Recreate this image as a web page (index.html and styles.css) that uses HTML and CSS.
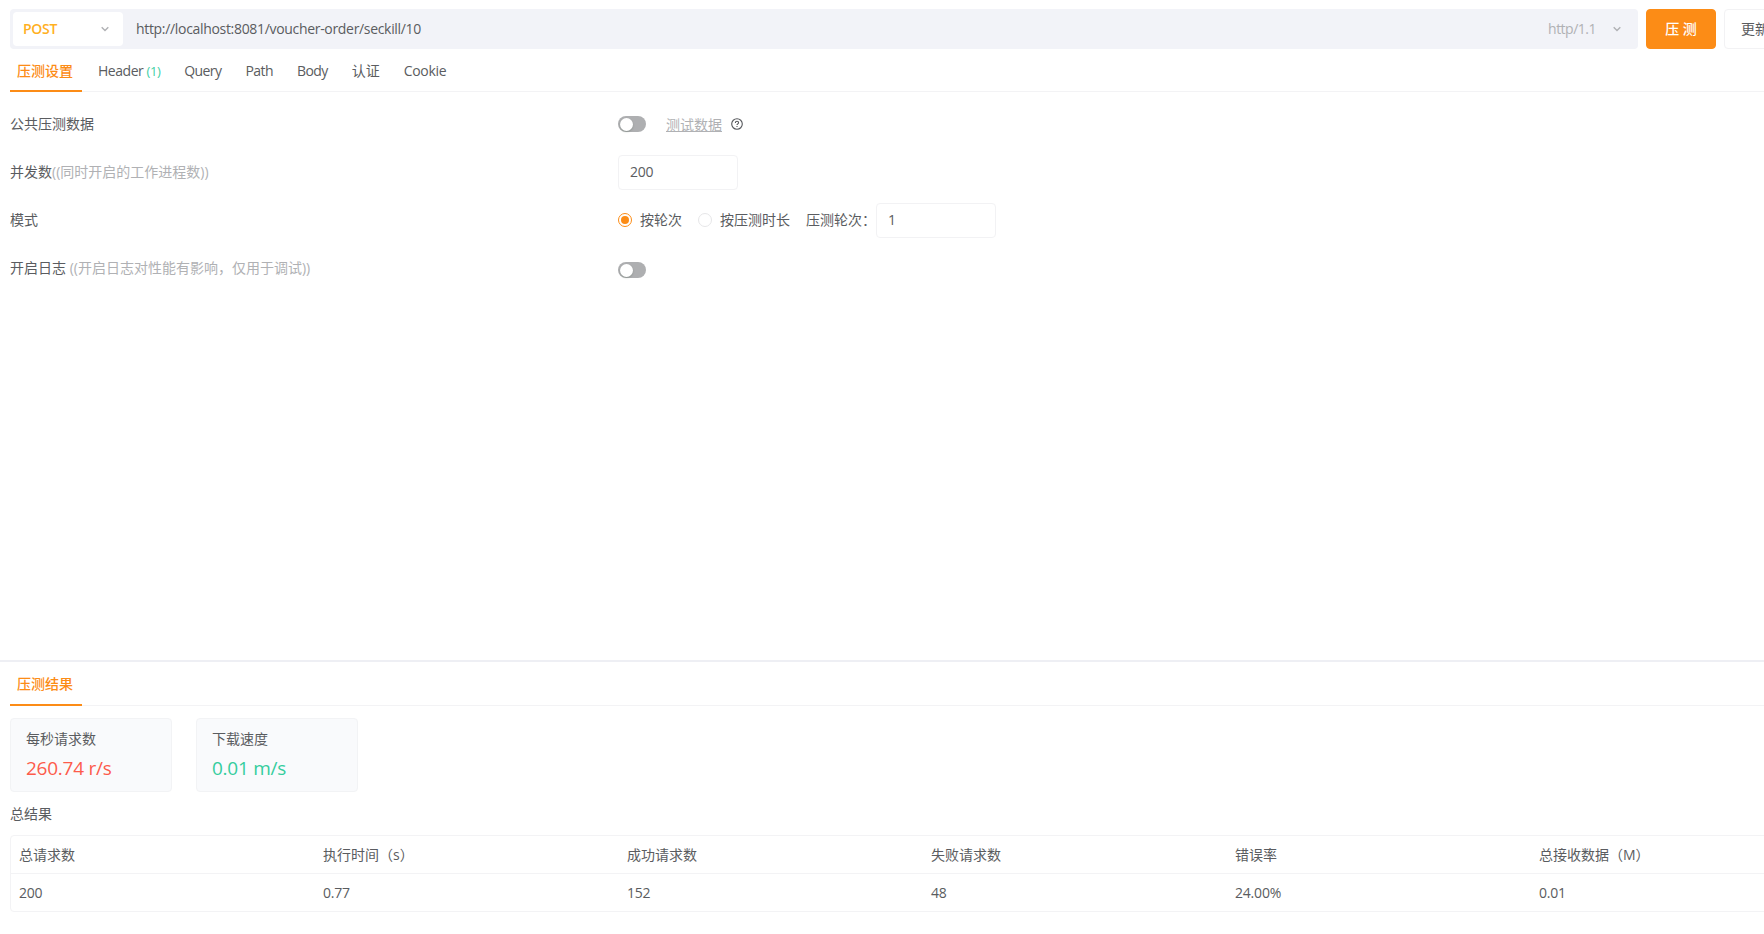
FILE: index.html
```html
<!DOCTYPE html>
<html lang="zh-CN">
<head>
    <meta charset="UTF-8">
    <title>压测</title>
    <link rel="stylesheet" href="styles.css">
</head>
<body>
    <div class="app">
        <!--请求地址栏-->
        <header class="request">
            <div class="url-bar">
                <div class="method">
                    <span>POST</span>
                    <svg class="arrow" viewBox="0 0 10 10"><path d="M1.7 3.2 5 6.6 8.3 3.2"/></svg>
                </div>
                <span class="url">http://localhost:8081/voucher-order/seckill/10</span>
                <span class="protocol">http/1.1</span>
                <svg class="arrow" viewBox="0 0 10 10"><path d="M1.7 3.2 5 6.6 8.3 3.2"/></svg>
            </div>
            <button class="btn primary">压 测</button>
            <button class="btn update">更新</button>
        </header>

        <nav class="tabs">
            <a class="tab active">压测设置</a>
            <a class="tab header-tab">Header <em>(1)</em></a>
            <a class="tab latin">Query</a>
            <a class="tab latin">Path</a>
            <a class="tab latin">Body</a>
            <a class="tab">认证</a>
            <a class="tab cookie-tab">Cookie</a>
        </nav>

        <!--压测设置-->
        <section class="settings">
            <div class="row">
                <div class="name">公共压测数据</div>
                <div class="field">
                    <span class="switch"></span>
                    <a class="data-link">测试数据</a>
                    <svg class="help" viewBox="0 0 12 12"><circle cx="6" cy="6" r="5.3"/><path d="M4.4 4.9C4.4 3.9 5.1 3.3 6 3.3S7.6 3.9 7.6 4.8C7.6 5.9 6 5.9 6 7.1M6 8.1V9.1"/></svg>
                </div>
            </div>
            <div class="row">
                <div class="name">并发数<span class="tip">((同时开启的工作进程数))</span></div>
                <div class="field"><input class="number" type="text" value="200"></div>
            </div>
            <div class="row">
                <div class="name">模式</div>
                <div class="field">
                    <label class="radio"><i class="dot checked"></i>按轮次</label>
                    <label class="radio"><i class="dot"></i>按压测时长</label>
                    <span class="rounds">压测轮次：</span>
                    <input class="number" type="text" value="1">
                </div>
            </div>
            <div class="row">
                <div class="name">开启日志 <span class="tip">((开启日志对性能有影响，仅用于调试))</span></div>
                <div class="field log"><span class="switch"></span></div>
            </div>
        </section>

        <!--压测结果-->
        <section class="result">
            <nav class="tabs">
                <a class="tab active">压测结果</a>
            </nav>
            <div class="cards">
                <div class="card">
                    <p>每秒请求数</p>
                    <strong class="red">260.74 r/s</strong>
                </div>
                <div class="card">
                    <p>下载速度</p>
                    <strong class="green">0.01 m/s</strong>
                </div>
            </div>
            <h3>总结果</h3>
            <div class="table">
                <div class="tr">
                    <span>总请求数</span><span>执行时间（s）</span><span>成功请求数</span><span>失败请求数</span><span>错误率</span><span>总接收数据（M）</span>
                </div>
                <div class="tr values">
                    <span>200</span><span>0.77</span><span>152</span><span>48</span><span>24.00%</span><span>0.01</span>
                </div>
            </div>
        </section>
    </div>
</body>
</html>
```
FILE: styles.css
```css
:root{
    --orange: #fc8c16;
    --text: #5a5c60;
    --gray: #b0b1b4;
    --line: #f3f3f5;
}
*{box-sizing: border-box;}
body{
    margin: 0;
    height: 934px;
    overflow: hidden;
    font: 14px/20px "Open Sans", "Noto Sans CJK SC", sans-serif;
    color: var(--text);
    background-color: white;
}
.app{
    display: flex;
    flex-direction: column;
    width: 1844px;
    height: 934px;
    padding-top: 9px;
}

/*--------------地址栏--------------*/
.request{
    display: flex;
    gap: 8px;
    padding-left: 10px;
    height: 40px;
}
.url-bar{
    display: flex;
    align-items: center;
    width: 1628px;
    padding: 3px 16px 3px 3px;
    border-radius: 4px;
    background-color: #f2f3f8;
}
.method{
    display: flex;
    align-items: center;
    justify-content: space-between;
    width: 110px;
    height: 34px;
    padding: 0 13px 0 10px;
    border-radius: 4px;
    font-weight: 600;
    letter-spacing: -0.3px;
    color: #ffb01f;
    background-color: white;
}
.arrow{
    width: 10px;
    height: 10px;
    fill: none;
    stroke: var(--gray);
    stroke-width: 1.4;
}
.url{
    flex: 1;
    margin-left: 13px;
    letter-spacing: -0.32px;
}
.protocol{
    margin-right: 16px;
    letter-spacing: -0.5px;
    color: var(--gray);
}
.btn{
    width: 70px;
    height: 40px;
    padding: 0;
    border: 1px solid #f2f2f4;
    border-radius: 4px;
    font: inherit;
    color: var(--text);
    background-color: white;
}
.btn.update{width: 62px;}
.btn.primary{
    border-color: var(--orange);
    font-weight: 500;
    color: white;
    background-color: var(--orange);
}

/*--------------标签页--------------*/
.tabs{
    display: flex;
    gap: 8px;
    height: 43px;
    margin-left: 10px;
    border-bottom: 1px solid var(--line);
}
.tab{
    height: 43px;
    padding: 12px 8px 0;
    white-space: nowrap;
}
.tab em{
    font-style: normal;
    font-size: 13px;
    color: #3fcfa5;
}
.tab.active{
    width: 72px;
    padding-left: 7px;
    border-bottom: 2px solid var(--orange);
    font-weight: 500;
    color: var(--orange);
}
.header-tab{letter-spacing: -0.46px;}
.latin{letter-spacing: -0.58px;}
.cookie-tab{letter-spacing: -0.3px;}

/*--------------设置--------------*/
.settings{
    flex: 1;
    padding: 8px 0 0 10px;
}
.row{
    display: grid;
    grid-template-columns: 608px 1fr;
    align-items: center;
    height: 48px;
}
.tip{color: var(--gray);}
.field{
    display: flex;
    align-items: center;
}
.field.log{padding-top: 4px;}
.switch{
    width: 28px;
    height: 16px;
    padding: 1.5px;
    border-radius: 8px;
    background-color: #aeafb1;
}
.switch::before{
    content: "";
    display: block;
    width: 13px;
    height: 13px;
    border-radius: 50%;
    background-color: white;
    box-shadow: 0 1px 2px rgba(0, 35, 11, 0.2);
}
.data-link{
    margin: 2px 9px 0 20px;
    text-decoration: underline;
    color: var(--gray);
}
.help{
    width: 12px;
    height: 12px;
    fill: none;
    stroke: #56585c;
    stroke-width: 1.1;
}
.number{
    width: 120px;
    height: 35px;
    padding: 0 11px 2px;
    border: 1px solid #f2f2f4;
    border-radius: 4px;
    font: inherit;
    letter-spacing: -0.2px;
    color: var(--text);
    background-color: white;
}
.radio{
    display: flex;
    align-items: center;
    margin-right: 16px;
}
.dot{
    width: 14px;
    height: 14px;
    margin-right: 8px;
    padding: 2px;
    border: 1px solid #e6e6e8;
    border-radius: 50%;
}
.dot.checked{border-color: var(--orange);}
.dot.checked::before{
    content: "";
    display: block;
    width: 8px;
    height: 8px;
    border-radius: 50%;
    background-color: var(--orange);
}
.rounds{width: 70px;}

/*--------------结果--------------*/
.result{
    height: 274px;
    border-top: 2px solid #eeeff4;
}
.result .tabs, .result .tab{height: 44px;}
.cards{
    display: flex;
    gap: 24px;
    padding: 12px 0 0 10px;
}
.card{
    width: 162px;
    height: 74px;
    padding: 10px 15px;
    border: 1px solid #f2f3f5;
    border-radius: 4px;
    background-color: #f9fafc;
}
.card p{margin: 0 0 6px;}
.card strong{
    display: block;
    font-size: 19px;
    line-height: 26px;
    font-weight: 400;
    letter-spacing: -0.25px;
}
.red{color: #fd5b4b;}
.green{color: #35cd9e;}
.result h3{
    margin: 12px 0 11px 10px;
    font-size: 14px;
    font-weight: 400;
}
.table{
    width: 1826px;
    margin-left: 10px;
    border: 1px solid var(--line);
    border-radius: 4px;
}
.tr{
    display: grid;
    grid-template-columns: repeat(6, 304px);
    align-items: center;
    height: 37px;
}
.tr.values{
    height: 38px;
    border-top: 1px solid var(--line);
    letter-spacing: -0.2px;
}
.tr span{padding-left: 8px;}
```
